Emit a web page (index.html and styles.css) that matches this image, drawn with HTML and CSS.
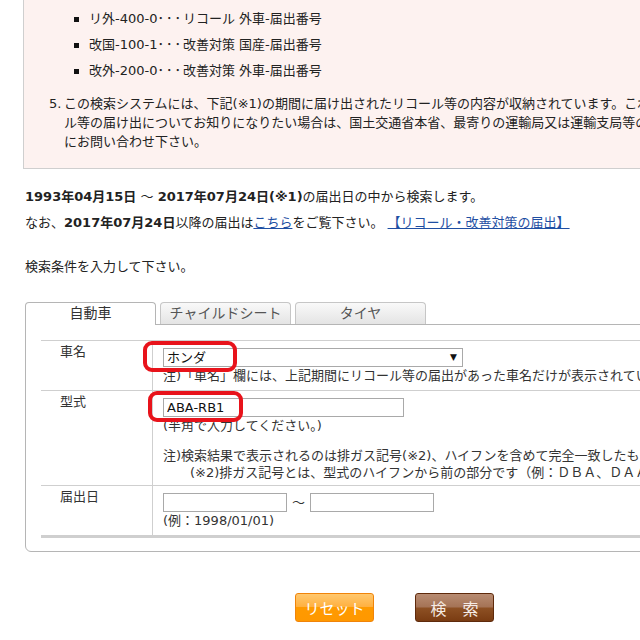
FILE: index.html
```html
<!DOCTYPE html>
<html lang="ja">
<head>
<meta charset="utf-8">
<title>リコール情報検索</title>
<link rel="stylesheet" href="styles.css">
</head>
<body>
<div class="page">
  <div class="notice">
    <ul class="codes">
      <li>リ外-400-0<span class="dots">･･･</span>リコール 外車-届出番号</li>
      <li>改国-100-1<span class="dots">･･･</span>改善対策 国産-届出番号</li>
      <li>改外-200-0<span class="dots">･･･</span>改善対策 外車-届出番号</li>
    </ul>
    <ol class="notes">
      <li><span class="num">5.</span><span class="note-body">この検索システムには、下記(※1)の期間に届け出されたリコール等の内容が収納されています。これ以前のリコー<br>ル等の届け出についてお知りになりたい場合は、国土交通省本省、最寄りの運輸局又は運輸支局等の相談窓口<br>にお問い合わせ下さい。</span></li>
    </ol>
  </div>

  <p class="range"><b>1993年04月15日</b> ～ <b>2017年07月24日(※1)</b>の届出日の中から検索します。</p>
  <p class="after">なお、<b>2017年07月24日</b>以降の届出は<a href="#">こちら</a>をご覧下さい。 <a href="#">【リコール・改善対策の届出】</a></p>
  <p class="prompt">検索条件を入力して下さい。</p>

  <div class="tabs">
    <div class="tab active">自動車</div>
    <div class="tab">チャイルドシート</div>
    <div class="tab">タイヤ</div>
  </div>

  <div class="panel">
    <div class="form">
      <div class="row">
        <div class="label">車名</div>
        <div class="field">
          <div class="select"><span>ホンダ</span><span class="arrow">▼</span></div>
          <p class="hint">注)「車名」欄には、上記期間にリコール等の届出があった車名だけが表示されています。</p>
          <span class="mark mark-name"></span>
        </div>
      </div>
      <div class="row">
        <div class="label">型式</div>
        <div class="field">
          <input class="text model" type="text" value="ABA-RB1">
          <p class="hint tall">(半角で入力してください。)</p>
          <p class="hint gap">注)検索結果で表示されるのは排ガス記号(※2)、ハイフンを含めて完全一致したものです。</p>
          <p class="hint indent">(※2)排ガス記号とは、型式のハイフンから前の部分です（例：ＤＢＡ、ＤＡＡ）</p>
          <span class="mark mark-model"></span>
        </div>
      </div>
      <div class="row last">
        <div class="label">届出日</div>
        <div class="field">
          <div class="dates">
            <input class="text date" type="text" value="">
            <span class="tilde">～</span>
            <input class="text date" type="text" value="">
          </div>
          <p class="hint">(例：1998/01/01)</p>
        </div>
      </div>
    </div>
  </div>

  <div class="actions">
    <button class="btn reset" type="button">リセット</button>
    <button class="btn search" type="button">検　索</button>
  </div>
</div>
</body>
</html>
```

FILE: styles.css
```css
html, body {
  margin: 0;
  padding: 0;
  overflow: hidden;
  background: #fff;
}

body {
  font-family: "DejaVu Sans", "Noto Sans CJK JP", sans-serif;
  font-size: 13px;
  color: #222;
}

.page {
  width: 739px;
  padding-left: 25px;
}

/* notice box */
.notice {
  margin-left: -2px;
  background: #fdf2f0;
  border: 1px solid #cfcfcf;
  border-top: none;
  padding: 6px 0 17px 0;
}

.codes {
  list-style: none;
  margin: 0;
  padding: 0 0 0 50px;
}

.codes li {
  display: flex;
  align-items: center;
  line-height: 26px;
  white-space: nowrap;
}

.codes li::before {
  content: "";
  width: 5px;
  height: 5px;
  background: #111;
  margin-right: 10px;
  flex: none;
}

.dots {
  letter-spacing: 2px;
}

.notes {
  list-style: none;
  margin: 10px 0 0 0;
  padding: 0 0 0 25px;
}

.notes li {
  display: flex;
  line-height: 19px;
}

.notes .num {
  width: 15px;
  flex: none;
}

.note-body {
  white-space: nowrap;
}

/* intro texts */
.range, .after, .prompt {
  margin: 0;
  line-height: 26px;
  white-space: nowrap;
}

.range {
  margin-top: 15px;
}

.prompt {
  margin-top: 18px;
}

b {
  font-weight: bold;
}

a {
  color: #1f4fa3;
  text-decoration: underline;
}

/* tabs */
.tabs {
  display: flex;
  gap: 4px;
  margin-top: 22px;
}

.tab {
  box-sizing: border-box;
  width: 131px;
  height: 22px;
  border: 1px solid #c6c6c6;
  border-bottom: none;
  border-radius: 4px 4px 0 0;
  background: linear-gradient(#f9f9f9, #e4e4e4);
  text-align: center;
  font-size: 14px;
  line-height: 21px;
  color: #555;
}

.tab.active {
  height: 23px;
  margin-bottom: -1px;
  position: relative;
  z-index: 1;
  background: #fff;
  border-color: #b5b5b5;
  color: #333;
}

/* panel */
.panel {
  border: 1px solid #b5b5b5;
  border-radius: 0 0 0 6px;
  padding: 15px 0 13px 15px;
}

.row {
  display: grid;
  grid-template-columns: 112px 1fr;
  border-top: 1px solid #cfcfcf;
}

.row.last {
  border-bottom: 3px solid #cfcfcf;
}

.label {
  box-sizing: border-box;
  border-right: 1px solid #cfcfcf;
  padding: 1px 0 0 19px;
  line-height: 19px;
  color: #333;
}

.field {
  position: relative;
  padding: 7px 0 6px 10px;
}

.row:nth-child(2) .field {
  padding-bottom: 4px;
}

.select {
  box-sizing: border-box;
  width: 300px;
  height: 19px;
  border: 1px solid #a9a9a9;
  background: #fff;
  display: flex;
  align-items: center;
  justify-content: space-between;
  padding: 0 5px 0 3px;
  line-height: 17px;
  color: #111;
}

.select .arrow {
  font-size: 9px;
  color: #111;
}

.text {
  box-sizing: border-box;
  height: 19px;
  border: 1px solid #a9a9a9;
  padding: 0 3px;
  margin: 0;
  font-family: inherit;
  font-size: 13px;
  color: #111;
  display: block;
}

.model {
  width: 241px;
}

.date {
  width: 124px;
}

.dates {
  display: flex;
  align-items: center;
  gap: 5px;
}

.tilde {
  color: #333;
  line-height: 19px;
}

.hint {
  margin: 0;
  line-height: 17px;
  color: #333;
  white-space: nowrap;
}

.hint.tall {
  line-height: 18px;
}

.hint.gap {
  margin-top: 12px;
}

.hint.indent {
  padding-left: 27px;
}

/* red annotation rings */
.mark {
  position: absolute;
  box-sizing: border-box;
  border: 4px solid #e8131b;
  border-radius: 9px;
  z-index: 2;
}

.mark-name {
  left: -10px;
  top: 0;
  width: 94px;
  height: 31px;
}

.mark-model {
  left: -5px;
  top: 0;
  width: 95px;
  height: 31px;
}

/* buttons */
.actions {
  display: flex;
  justify-content: center;
  gap: 41px;
  margin-top: 41px;
}

.btn {
  box-sizing: border-box;
  width: 79px;
  height: 29px;
  border-radius: 3px;
  font-family: "Noto Sans CJK JP", sans-serif;
  color: #fff;
  padding: 0;
  cursor: pointer;
}

.reset {
  border: 1px solid #f0840a;
  background: linear-gradient(#ffc86e 0%, #ffb040 48%, #ff9a00 50%, #ff9800 100%);
  font-size: 15px;
}

.search {
  border: 1px solid #5f2a0c;
  background: linear-gradient(#b88c72 0%, #a57356 48%, #8d5024 52%, #7a3c12 100%);
  font-size: 16px;
  color: #f6ece6;
}
```
